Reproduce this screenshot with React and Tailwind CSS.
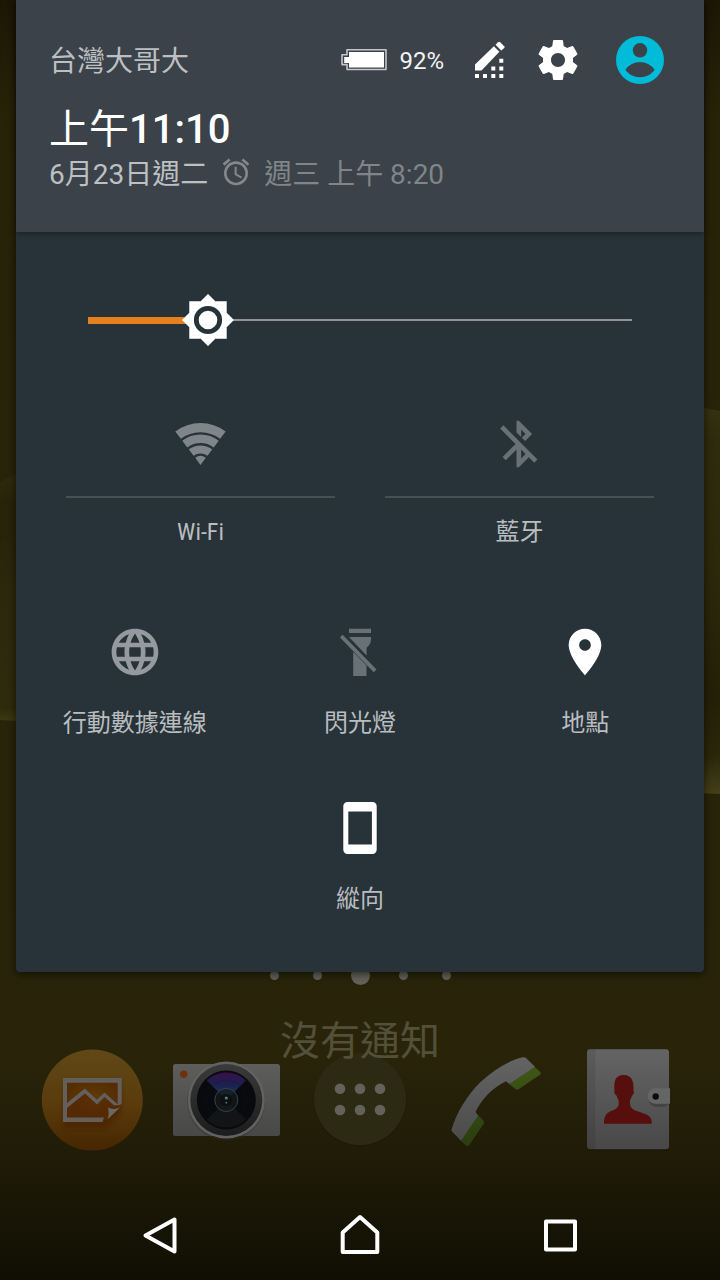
import { useState } from "react";
import { MdAlarm, MdLanguage } from "react-icons/md";

const wifiBand = (outer, inner) => {
  const x = (r) => 27.5 + r * 0.6;
  const xl = (r) => 27.5 - r * 0.6;
  const y = (r) => 49 - r * 0.8;
  return `M${xl(outer)} ${y(outer)}A${outer} ${outer} 0 0 1 ${x(outer)} ${y(outer)}L${x(inner)} ${y(inner)}A${inner} ${inner} 0 0 0 ${xl(inner)} ${y(inner)}Z`;
};

function WifiIcon() {
  return (
    <svg viewBox="0 0 56 56" className="size-14" fill="#7f8689" aria-hidden="true">
      <path d={wifiBand(42, 32.7)} />
      <path d={wifiBand(30.4, 22)} />
      <path d={wifiBand(19.6, 11.6)} />
      <path d="M27.500 49L22.200 41.800A9 9 0 0 1 32.800 41.800Z" />
    </svg>
  );
}

function BluetoothOffIcon() {
  return (
    <svg viewBox="0.5 0 24 24" className="size-14" fill="#687176" aria-hidden="true">
      <path d="M13 5.83l1.88 1.88-1.6 1.6 1.41 1.41 3.02-3.02L12 2h-1v5.03l2 2v-3.2zM5.41 4L4 5.41 10.59 12 5 17.59 6.41 19 11 14.41V22h1l4.29-4.29 2.3 2.29L20 18.59 5.41 4zM13 18.17v-3.76l1.88 1.88L13 18.17z" />
    </svg>
  );
}

function FlashlightOffIcon() {
  return (
    <svg viewBox="0 0 56 56" className="size-14" fill="#687176" aria-hidden="true">
      <path d="M17 4.7h22v4.4H17zM17 13h22v2.4q0 4-2.4 6.4l-2 2V31.500zM21.200 27.800L34.500 41.500V52H21.200z" />
      <path d="M10.600 10.700L44.500 45.600l-2.700 2.700L8 13.600z" />
    </svg>
  );
}

function PinIcon() {
  return (
    <svg viewBox="0 0 24 24" className="size-14" fill="#fff" aria-hidden="true">
      <path d="M12 2C8.130 2 5 5.130 5 9c0 5.250 7 13 7 13s7-7.750 7-13c0-3.870-3.130-7-7-7zm0 9.500c-1.380 0-2.500-1.120-2.500-2.500s1.120-2.500 2.500-2.500 2.500 1.120 2.500 2.500-1.120 2.500-2.500 2.500z" />
    </svg>
  );
}

function PortraitIcon() {
  return (
    <svg viewBox="0 0 56 56" className="size-14" fill="#fff" fillRule="evenodd" aria-hidden="true">
      <path d="M15.500 2h25a4.200 4.200 0 0 1 4.200 4.200v43.600a4.200 4.200 0 0 1-4.200 4.200h-25a4.200 4.200 0 0 1-4.200-4.200V6.200A4.200 4.200 0 0 1 15.500 2zM16.300 11.500v33h23.600v-33z" />
    </svg>
  );
}

function BatteryIcon() {
  return (
    <svg viewBox="0 0 46 22" className="h-[22px] w-[46px]" aria-label="92%">
      <path d="M6 .8H45V20.500H6V15.600H1V5.700H6Z" fill="none" stroke="#c3c6ca" strokeWidth="1.600" strokeLinejoin="round" />
      <path d="M8 3H43V18.500H8V14H3.200V8H8Z" fill="#fff" />
    </svg>
  );
}

function EditIcon() {
  return (
    <svg viewBox="0 0 32 38" className="h-[38px] w-8" fill="#fff" aria-hidden="true">
      <path d="M1 23.500L19.900 5.200L25.400 10.800L7.500 29.500H1Z" />
      <path d="M21.500 3.800L24.200 1.200Q25.300 .4 26.400 1.400L30.200 5.200Q31 6.200 30.200 7.100L27.200 9.400Z" />
      <path d="M1 33h4v4H1zM9 33h4v4H9zM17.300 33h4v4h-4zM25.300 33h4v4h-4zM17.300 25.600h4v4h-4zM25.300 25.600h4v4h-4zM25.300 17.700h4v4h-4z" />
    </svg>
  );
}

function GearIcon() {
  return (
    <svg viewBox="0 0 24 24" className="size-12" fill="#fff" aria-hidden="true">
      <path d="M19.430 12.980c.04-.32.07-.64.07-.98s-.03-.66-.07-.98l2.110-1.650c.19-.15.24-.42.12-.64l-2-3.460c-.12-.22-.39-.3-.61-.22l-2.490 1c-.52-.4-1.080-.73-1.690-.98l-.38-2.650C14.460 2.180 14.250 2 14 2h-4c-.25 0-.46.18-.49.42l-.38 2.650c-.61.25-1.170.59-1.690.98l-2.490-1c-.23-.09-.49 0-.61.22l-2 3.460c-.13.22-.07.49.12.64l2.110 1.650c-.04.32-.07.65-.07.98s.03.66.07.98l-2.110 1.650c-.19.15-.24.42-.12.64l2 3.460c.12.22.39.3.61.22l2.490-1c.52.4 1.080.73 1.690.98l.38 2.650c.03.24.24.42.49.42h4c.25 0 .46-.18.49-.42l.38-2.650c.61-.25 1.170-.59 1.690-.98l2.490 1c.23.09.49 0 .61-.22l2-3.460c.12-.22.07-.49-.12-.64l-2.110-1.650zM12 15.500c-1.930 0-3.500-1.570-3.500-3.500s1.570-3.500 3.500-3.500 3.500 1.570 3.500 3.500-1.570 3.500-3.500 3.500z" />
    </svg>
  );
}

function AccountIcon() {
  return (
    <svg viewBox="0 0 48 48" className="size-12" aria-hidden="true">
      <circle cx="24" cy="24" r="24" fill="#00bcd8" />
      <circle cx="24" cy="14.300" r="7.200" fill="#3b4249" />
      <path d="M9.500 33.800C12.500 28.800 18.500 26 24 26s11.500 2.800 14.500 7.800C35.500 38.400 30 41.300 24 41.300S12.500 38.400 9.500 33.800Z" fill="#3b4249" />
    </svg>
  );
}

function BrightnessSlider() {
  const [value, setValue] = useState(22);
  return (
    <div className="relative mx-[72px] flex h-12 items-center">
      <div className="h-0.5 w-full bg-[#8f9496]" />
      <div className="absolute left-0 h-[7px] bg-[#e6801d]" style={{ width: `${value}%` }} />
      <svg viewBox="-27 -27 54 54" className="absolute size-[54px] -translate-x-1/2" style={{ left: `${value}%` }} aria-hidden="true">
        <path d="M-18.700-18.700H-7.300L0-26L7.300-18.700H18.700V-7.300L26 0L18.700 7.300V18.700H7.300L0 26L-7.300 18.700H-18.700V7.300L-26 0L-18.700-7.300Z" fill="#fff" />
        <circle r="11.700" fill="none" stroke="#283339" strokeWidth="4.800" />
      </svg>
      <input
        type="range"
        min="0"
        max="100"
        value={value}
        onChange={(e) => setValue(Number(e.target.value))}
        aria-label="亮度"
        className="absolute inset-0 h-full w-full cursor-pointer opacity-0"
      />
    </div>
  );
}

function Tile({ icon, label, divided, on }) {
  const [pressed, setPressed] = useState(Boolean(on));
  return (
    <button
      type="button"
      aria-pressed={pressed}
      onClick={() => setPressed(!pressed)}
      className="flex flex-col items-center"
    >
      {icon}
      {divided && <span className="mt-6 h-0.5 w-full bg-[#465156]" />}
      <span className={divided ? "mt-[18px] text-2xl text-[#b9bdbf]" : "mt-[27px] text-2xl text-[#b9bdbf]"}>{label}</span>
    </button>
  );
}

function GalleryApp() {
  return (
    <svg viewBox="0 0 108 108" className="size-[108px]" aria-hidden="true">
      <defs>
        <linearGradient id="gal" x1="0" y1="0" x2="0" y2="1">
          <stop offset="0" stopColor="#604817" />
          <stop offset=".55" stopColor="#5a3b0c" />
          <stop offset="1" stopColor="#472600" />
        </linearGradient>
        <radialGradient id="galIn">
          <stop offset="0" stopColor="#623d08" />
          <stop offset="1" stopColor="#552d03" />
        </radialGradient>
        <filter id="soft" x="-20%" y="-20%" width="140%" height="150%">
          <feGaussianBlur stdDeviation="2" />
        </filter>
      </defs>
      <circle cx="54.300" cy="54" r="50.500" fill="url(#gal)" />
      <path d="M26 36H83V66L68 82H26Z" fill="#4a2000" opacity=".7" filter="url(#soft)" />
      <path d="M27 34H82V60L68 74H27Z" fill="url(#galIn)" />
      <path d="M27 60L47 42L59 53L67 46L80 57V64L66 74H27Z" fill="#542703" opacity=".6" />
      <path d="M25 32H83.700V58L79.700 59.500V36.800H29V57L46.800 42.500L59 53.500L66.500 46.500L79.500 58L82 59L76 59.500L66.500 51L59 58.500L47 47.500L29 62V71.500H66L64.500 76H25Z" fill="#625f5c" />
      <path d="M70 61.500Q76 64.500 82.500 61L69.500 73.500Q71.500 68 70 61.500Z" fill="#6b6764" />
    </svg>
  );
}

function CameraApp() {
  return (
    <svg viewBox="0 0 108 108" className="size-[108px]" aria-hidden="true">
      <defs>
        <linearGradient id="camBody" x1="0" y1="0" x2="0" y2="1">
          <stop offset="0" stopColor="#5d5d5c" />
          <stop offset="1" stopColor="#484847" />
        </linearGradient>
        <linearGradient id="camRing" x1="0" y1="0" x2="0" y2="1">
          <stop offset="0" stopColor="#393a39" />
          <stop offset="1" stopColor="#1c1c1c" />
        </linearGradient>
        <linearGradient id="flare" x1="0" y1="0" x2="0" y2="1">
          <stop offset="0" stopColor="#391048" />
          <stop offset=".4" stopColor="#1e1e50" />
          <stop offset=".8" stopColor="#163650" />
          <stop offset="1" stopColor="#1e4656" />
        </linearGradient>
      </defs>
      <rect x="1" y="18" width="107" height="72" rx="2.500" fill="url(#camBody)" />
      <circle cx="11.700" cy="28.300" r="3.700" fill="#70300e" />
      <circle cx="54" cy="55.500" r="39" fill="#30302f" opacity=".35" />
      <circle cx="54.300" cy="54" r="38.500" fill="#626262" />
      <circle cx="54.300" cy="54" r="36" fill="url(#camRing)" />
      <circle cx="54.300" cy="54" r="29.500" fill="#080a0d" />
      <path d="M54.300 54L34.800 34.500A27.500 27.500 0 0 1 73.800 34.500Z" fill="url(#flare)" />
      <path d="M54.300 54L34.800 73.500A27.500 27.500 0 0 0 73.800 73.500Z" fill="#121416" />
      <circle cx="54.300" cy="54" r="20" fill="none" stroke="#15171a" strokeWidth=".6" opacity=".5" />
      <circle cx="54.300" cy="54" r="11.500" fill="#14191b" fillOpacity=".7" stroke="#394247" />
      <circle cx="54.300" cy="54" r="6" fill="#0b1013" />
      <circle cx="54.300" cy="52" r="1.600" fill="#667982" />
      <circle cx="54.300" cy="56.700" r=".9" fill="#66716f" />
    </svg>
  );
}

function AppDrawer() {
  return (
    <svg viewBox="0 0 108 108" className="size-[108px]" aria-hidden="true">
      <circle cx="54" cy="54" r="46.500" fill="#1c1807" opacity=".5" />
      <circle cx="54" cy="53" r="46" fill="#2d2a14" />
      <g fill="#636259">
        {[42.7, 64].map((y) => [34, 54, 74].map((x) => <circle key={`${x}-${y}`} cx={x} cy={y} r="5.300" />))}
      </g>
    </svg>
  );
}

function PhoneApp() {
  return (
    <svg viewBox="-1.5 0 108 108" className="size-[108px]" aria-hidden="true">
      <defs>
        <linearGradient id="hand" x1="0" y1="0" x2="0" y2="1">
          <stop offset="0" stopColor="#646464" />
          <stop offset="1" stopColor="#4b4b4b" />
        </linearGradient>
        <linearGradient id="green" x1="0" y1="0" x2="0" y2="1">
          <stop offset="0" stopColor="#3e5716" />
          <stop offset="1" stopColor="#2a3d0e" />
        </linearGradient>
      </defs>
      <path d="M93 20.700L98.700 26Q100 27.300 98.500 28.700L77 43.300Q75.300 44.500 73.800 43L67.500 38ZM36.500 69L42.300 75Q43 76.300 42 78L28 98.800Q26.500 101 24.300 99.300L19.300 94.700Z" fill="url(#green)" />
      <path d="M10 84C15 66 26 49 39 36C52 24 66 15 81 11.300Q83 10.800 84.500 12L93.500 20.700L67.800 38L64.500 35.300C52 41 40 53 34 66L36.700 69.500L19.500 94.700L11 86Q9.800 85 10 84Z" fill="url(#hand)" />
    </svg>
  );
}

function ContactsApp() {
  return (
    <svg viewBox="0 0 108 108" className="size-[108px]" aria-hidden="true">
      <defs>
        <linearGradient id="book" x1="0" y1="0" x2="0" y2="1">
          <stop offset="0" stopColor="#646464" />
          <stop offset="1" stopColor="#484848" />
        </linearGradient>
      </defs>
      <rect x="13" y="4" width="82" height="100.500" rx="3" fill="#171405" opacity=".7" />
      <rect x="13" y="3.300" width="82" height="100" rx="3" fill="url(#book)" />
      <path d="M16 3.300h5.300v100H16a3 3 0 0 1-3-3v-94a3 3 0 0 1 3-3z" fill="#000" opacity=".08" />
      <path d="M30 77.700C30 69 33 66.500 38.500 64.500C43.500 62.500 45.500 60.500 44.500 54Q43 51.500 42.500 49.500Q39.500 47.500 40.500 44.500C39.500 34 42 29 49.700 29C57 29 60 34 59.500 44.500Q61 47 57.800 50Q57.500 52 56 54C55.500 60.500 57 63 62.500 65C74 69 78 69.500 77.800 77.700Z" fill="#560f0d" />
      <rect x="75" y="45" width="21" height="16" rx="7" fill="#000" opacity=".18" />
      <path d="M96 42.300H81.500a7.700 7.700 0 0 0 0 15.400H96Z" fill="#656565" />
      <circle cx="81.700" cy="50.500" r="3.200" fill="#0c0c0c" />
    </svg>
  );
}

function Wallpaper() {
  return (
    <svg viewBox="0 0 720 1280" preserveAspectRatio="none" className="absolute inset-0 h-full w-full" aria-hidden="true">
      <defs>
        <linearGradient id="wall" x1="0" y1="0" x2="0" y2="1">
          <stop offset="0" stopColor="#1b1705" />
          <stop offset=".09" stopColor="#282208" />
          <stop offset=".82" stopColor="#292409" />
          <stop offset=".9" stopColor="#201c07" />
          <stop offset="1" stopColor="#100f04" />
        </linearGradient>
        <linearGradient id="leafL" x1="0" y1="0" x2="0" y2="1">
          <stop offset="0" stopColor="#28240a" />
          <stop offset=".3" stopColor="#2d280c" />
          <stop offset=".93" stopColor="#2e2b0d" />
          <stop offset="1" stopColor="#3b3a11" />
        </linearGradient>
        <linearGradient id="leafTop" x1="0" y1="0" x2="0" y2="1">
          <stop offset="0" stopColor="#2f2b0f" />
          <stop offset="1" stopColor="#292409" />
        </linearGradient>
        <linearGradient id="leafR" x1="0" y1="0" x2="0" y2="1">
          <stop offset="0" stopColor="#343210" />
          <stop offset=".08" stopColor="#2e2c0c" />
          <stop offset=".4" stopColor="#2c290b" />
          <stop offset=".75" stopColor="#242007" />
          <stop offset=".9" stopColor="#2b260a" />
          <stop offset="1" stopColor="#454018" />
        </linearGradient>
      </defs>
      <rect width="720" height="1280" fill="url(#wall)" />
      <path d="M0 482L20 472V500H0Z" fill="url(#leafTop)" />
      <path d="M0 544L20 533V721L0 720Z" fill="url(#leafL)" />
      <path d="M700 407L720 411V794L700 793Z" fill="url(#leafR)" />
    </svg>
  );
}

const tiles = [
  { label: "行動數據連線", icon: <MdLanguage className="size-14 text-[#949a9d]" aria-hidden="true" /> },
  { label: "閃光燈", icon: <FlashlightOffIcon /> },
  { label: "地點", icon: <PinIcon />, on: true },
];

const apps = [
  { label: "相簿", icon: <GalleryApp /> },
  { label: "相機", icon: <CameraApp /> },
  { label: "應用程式", icon: <AppDrawer /> },
  { label: "電話", icon: <PhoneApp /> },
  { label: "聯絡人", icon: <ContactsApp /> },
];

export default function App() {
  return (
    <div className="relative flex min-h-screen flex-col overflow-hidden bg-[#292409] font-['Roboto','Noto_Sans_CJK_TC',sans-serif]">
      <Wallpaper />

      <section className="relative z-10 mx-4 rounded-b bg-[#283339] shadow-[0_2px_8px_rgba(0,0,0,0.6)]">
        <header className="bg-[#3b4249] pt-9 pr-10 pb-[41px] pl-[33px] shadow-[0_2px_5px_rgba(0,0,0,0.35)]">
          <div className="flex h-12 items-center">
            <p className="pt-1 text-[28px] leading-8 text-[#bdc0c2]">台灣大哥大</p>
            <div className="ml-auto flex items-center">
              <BatteryIcon />
              <span className="ml-3 pt-0.5 text-2xl text-[#f2f3f3]">92%</span>
              <button type="button" aria-label="編輯" className="ml-[30px]"><EditIcon /></button>
              <button type="button" aria-label="設定" className="ml-7"><GearIcon /></button>
              <button type="button" aria-label="使用者" className="ml-[34px]"><AccountIcon /></button>
            </div>
          </div>
          <p className="mt-[22px] text-[40px] leading-[48px] text-white">
            上午<span className="font-medium">11:10</span>
          </p>
          <div className="mt-0.5 flex items-start text-[28px] leading-8">
            <span className="pt-[3px] text-[#bdc0c2]">6月23日週二</span>
            <MdAlarm className="mx-3 size-8 text-[#83888c]" aria-hidden="true" />
            <span className="pt-[3px] text-[#7f8589]">週三 上午 8:20</span>
          </div>
        </header>

        <div className="pt-16 pb-[57px]">
          <BrightnessSlider />
          <div className="mt-[72px] grid grid-cols-2 gap-x-[50px] px-[50px] font-['Roboto_Condensed','Roboto','Noto_Sans_CJK_TC',sans-serif]">
            <Tile icon={<WifiIcon />} label="Wi-Fi" divided />
            <Tile icon={<BluetoothOffIcon />} label="藍牙" divided />
          </div>
          <div className="mt-[76px] grid grid-cols-3 px-1.5">
            {tiles.map((t) => (
              <Tile key={t.label} {...t} />
            ))}
          </div>
          <div className="mt-[61px] flex justify-center">
            <Tile icon={<PortraitIcon />} label="縱向" on />
          </div>
        </div>
      </section>

      <div className="relative -mt-[6px] flex h-5 items-center justify-center gap-[34px] pb-0.5" aria-hidden="true">
        <span className="size-[9px] rounded-full bg-[#636159]" />
        <span className="size-[9px] rounded-full bg-[#636159]" />
        <span className="-mx-[5px] size-[19px] rounded-full bg-[#636159]" />
        <span className="size-[9px] rounded-full bg-[#636159]" />
        <span className="size-[9px] rounded-full bg-[#636159]" />
      </div>
      <p className="relative z-10 mt-8 text-center text-[40px] leading-[48px] text-[#535039]">沒有通知</p>
      <nav className="relative -mt-5 grid grid-cols-5 px-[25px]">
        {apps.map((a) => (
          <button key={a.label} type="button" aria-label={a.label} className="flex justify-center">
            {a.icon}
          </button>
        ))}
      </nav>

      <nav className="relative mt-auto grid h-[88px] grid-cols-3 items-center px-[60px]">
        <button type="button" aria-label="返回" className="flex justify-center">
          <svg viewBox="0 0 48 48" className="size-12" fill="none" stroke="#fff" strokeWidth="4" strokeLinejoin="round" aria-hidden="true">
            <path d="M38.500 7.500V39.500L9.500 23.500Z" />
          </svg>
        </button>
        <button type="button" aria-label="主畫面" className="flex justify-center">
          <svg viewBox="0 0 48 48" className="size-12" fill="none" stroke="#fff" strokeWidth="4" strokeLinejoin="round" aria-hidden="true">
            <path d="M24 5L41.300 20.500V40H6.700V20.500Z" />
          </svg>
        </button>
        <button type="button" aria-label="最近使用" className="flex justify-center">
          <svg viewBox="0 0 48 48" className="size-12" fill="none" stroke="#fff" strokeWidth="4" strokeLinejoin="round" aria-hidden="true">
            <path d="M10 9.500H39V37.500H10Z" />
          </svg>
        </button>
      </nav>
    </div>
  );
}
